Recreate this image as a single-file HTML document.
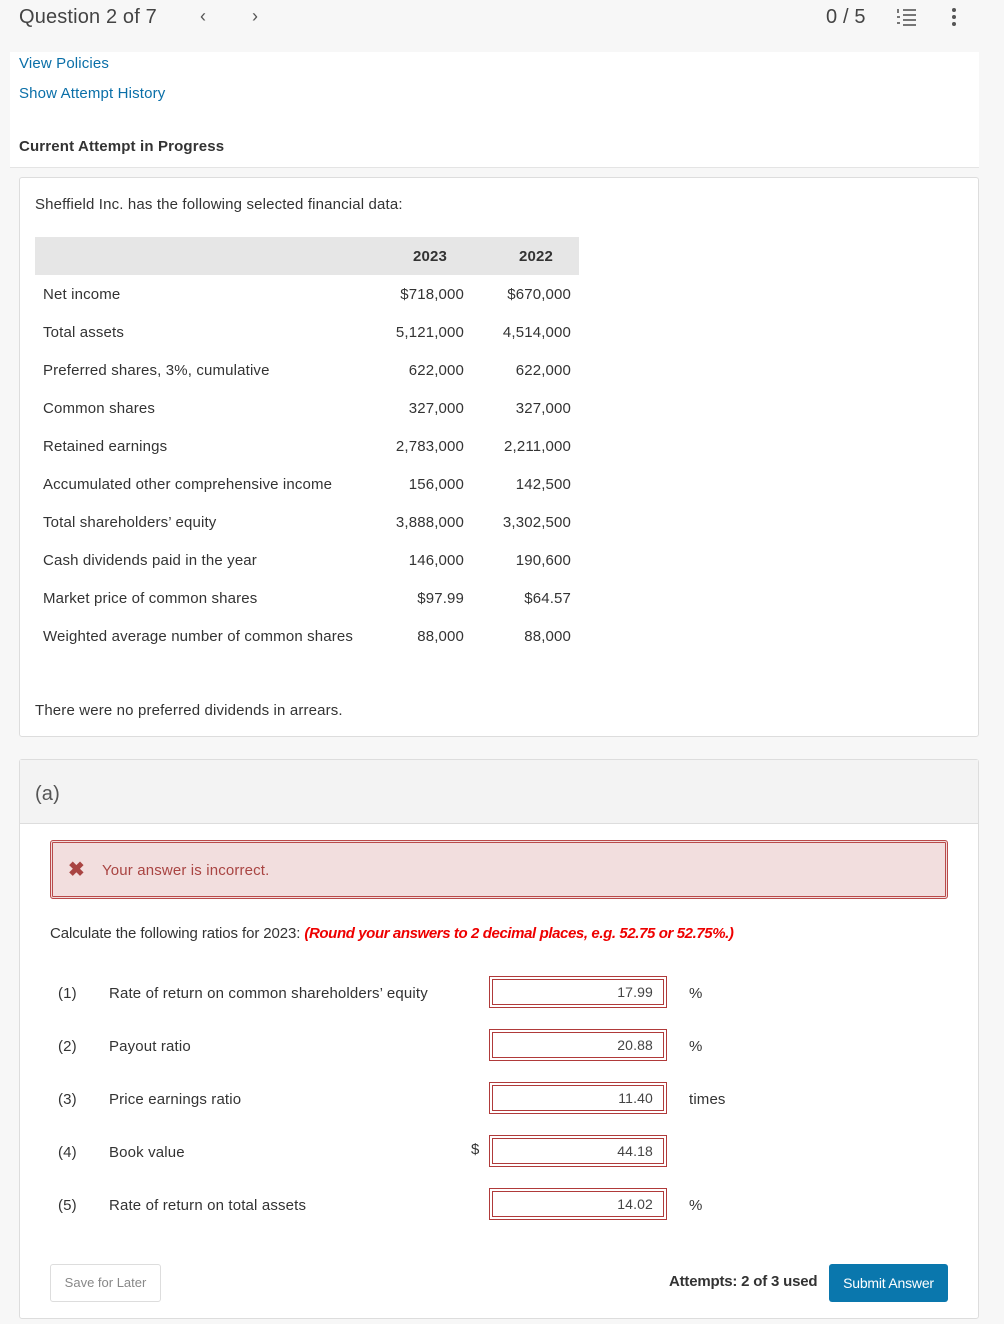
<!DOCTYPE html>
<html><head><style>
*{margin:0;padding:0;box-sizing:border-box}
body{width:1004px;height:1324px;background:#f7f7f7;font-family:"Liberation Sans",sans-serif;color:#333;font-size:15px;position:relative;overflow:hidden;letter-spacing:0.15px}
.a{position:absolute;white-space:nowrap}
.r{text-align:right}
.inp{position:absolute;width:178px;height:32px;border:1px solid #b03a3a;background:#fff}
.inp div{position:absolute;left:2px;top:2px;right:2px;bottom:2px;border:1px solid #b03a3a;text-align:right;padding-right:10px;font-size:14px;line-height:25px;color:#444}
</style></head><body>
<div class="a" style="left:19px;top:6px;font-size:20px;color:#444">Question 2 of 7</div>
<div class="a" style="left:200px;top:6px;font-size:18px;color:#555">‹</div>
<div class="a" style="left:252px;top:6px;font-size:18px;color:#555">›</div>
<div class="a" style="left:826px;top:6px;font-size:20px;color:#444">0 / 5</div>
<svg class="a" style="left:896px;top:8px" width="22" height="18"><g stroke="#555" stroke-width="1.6"><line x1="7" y1="2" x2="20" y2="2"/><line x1="7" y1="7" x2="20" y2="7"/><line x1="7" y1="12" x2="20" y2="12"/><line x1="7" y1="17" x2="20" y2="17"/><line x1="2" y1="1" x2="2" y2="5"/><line x1="1" y1="9" x2="4" y2="9"/><line x1="1" y1="15" x2="4" y2="15"/></g></svg>
<svg class="a" style="left:950px;top:7px" width="8" height="20"><circle cx="4" cy="3" r="2" fill="#555"/><circle cx="4" cy="10" r="2" fill="#555"/><circle cx="4" cy="17" r="2" fill="#555"/></svg>
<div class="a" style="left:10px;top:52px;width:969px;height:116px;background:#fff;border-bottom:1px solid #e4e4e4"></div>
<div class="a" style="left:19px;top:55px;color:#0a6fa8">View Policies</div>
<div class="a" style="left:19px;top:85px;color:#0a6fa8">Show Attempt History</div>
<div class="a" style="left:19px;top:138px;font-weight:bold;color:#333">Current Attempt in Progress</div>

<div class="a" style="left:19px;top:177px;width:960px;height:560px;background:#fff;border:1px solid #ddd;border-radius:3px"></div>
<div class="a" style="left:35px;top:196px">Sheffield Inc. has the following selected financial data:</div>
<div class="a" style="left:35px;top:237px;width:544px;height:38px;background:#e6e6e6"></div>
<div class="a r" style="left:347px;width:100px;top:248px;font-weight:bold">2023</div>
<div class="a r" style="left:453px;width:100px;top:248px;font-weight:bold">2022</div>
<div id="rows"></div>
<div class="a" style="left:35px;top:702px">There were no preferred dividends in arrears.</div>

<div class="a" style="left:19px;top:759px;width:960px;height:560px;background:#fff;border:1px solid #ddd;border-radius:3px"></div>
<div class="a" style="left:20px;top:760px;width:958px;height:64px;background:#f3f3f3;border-bottom:1px solid #ddd"></div>
<div class="a" style="left:35px;top:783px;font-size:20px;color:#555">(a)</div>
<div class="a" style="left:50px;top:840px;width:898px;height:59px;background:#f2dede;border:1px solid #b94a4a;border-radius:3px;box-shadow:inset 0 0 0 1px #f2dede,inset 0 0 0 2px #b94a4a"></div>
<div class="a" style="left:68px;top:857px;font-size:20px;font-weight:bold;color:#a94442">✖</div>
<div class="a" style="left:102px;top:862px;color:#a94442">Your answer is incorrect.</div>
<div class="a" style="left:50px;top:925px;letter-spacing:-0.1px">Calculate the following ratios for 2023: <b style="color:#e00;font-style:italic;letter-spacing:-0.4px">(Round your answers to 2 decimal places, e.g. 52.75 or 52.75%.)</b></div>

<div class="a" style="left:58px;top:985px">(1)</div><div class="a" style="left:109px;top:985px">Rate of return on common shareholders’ equity</div>
<div class="inp" style="left:489px;top:976px"><div>17.99</div></div><div class="a" style="left:689px;top:985px">%</div>
<div class="a" style="left:58px;top:1038px">(2)</div><div class="a" style="left:109px;top:1038px">Payout ratio</div>
<div class="inp" style="left:489px;top:1029px"><div>20.88</div></div><div class="a" style="left:689px;top:1038px">%</div>
<div class="a" style="left:58px;top:1091px">(3)</div><div class="a" style="left:109px;top:1091px">Price earnings ratio</div>
<div class="inp" style="left:489px;top:1082px"><div>11.40</div></div><div class="a" style="left:689px;top:1091px">times</div>
<div class="a" style="left:58px;top:1144px">(4)</div><div class="a" style="left:109px;top:1144px">Book value</div>
<div class="a" style="left:471px;top:1141px">$</div>
<div class="inp" style="left:489px;top:1135px"><div>44.18</div></div>
<div class="a" style="left:58px;top:1197px">(5)</div><div class="a" style="left:109px;top:1197px">Rate of return on total assets</div>
<div class="inp" style="left:489px;top:1188px"><div>14.02</div></div><div class="a" style="left:689px;top:1197px">%</div>

<div class="a" style="left:50px;top:1264px;width:111px;height:38px;border:1px solid #ddd;border-radius:3px;font-size:13px;color:#888;text-align:center;line-height:36px;letter-spacing:0">Save for Later</div>
<div class="a" style="left:669px;top:1273px;font-weight:bold;color:#333;letter-spacing:-0.2px">Attempts: 2 of 3 used</div>
<div class="a" style="left:829px;top:1264px;width:119px;height:38px;background:#0a77ad;border-radius:3px;color:#fff;font-size:14px;text-align:center;line-height:38px;letter-spacing:-0.2px">Submit Answer</div>

<script>
var d=[["Net income","$718,000","$670,000"],["Total assets","5,121,000","4,514,000"],["Preferred shares, 3%, cumulative","622,000","622,000"],["Common shares","327,000","327,000"],["Retained earnings","2,783,000","2,211,000"],["Accumulated other comprehensive income","156,000","142,500"],["Total shareholders’ equity","3,888,000","3,302,500"],["Cash dividends paid in the year","146,000","190,600"],["Market price of common shares","$97.99","$64.57"],["Weighted average number of common shares","88,000","88,000"]];
var h="";d.forEach(function(r,i){var t=286+i*38;h+='<div class="a" style="left:43px;top:'+t+'px">'+r[0]+'</div><div class="a r" style="left:344px;width:120px;top:'+t+'px">'+r[1]+'</div><div class="a r" style="left:451px;width:120px;top:'+t+'px">'+r[2]+'</div>';});
document.getElementById("rows").outerHTML=h;
</script>
</body></html>
